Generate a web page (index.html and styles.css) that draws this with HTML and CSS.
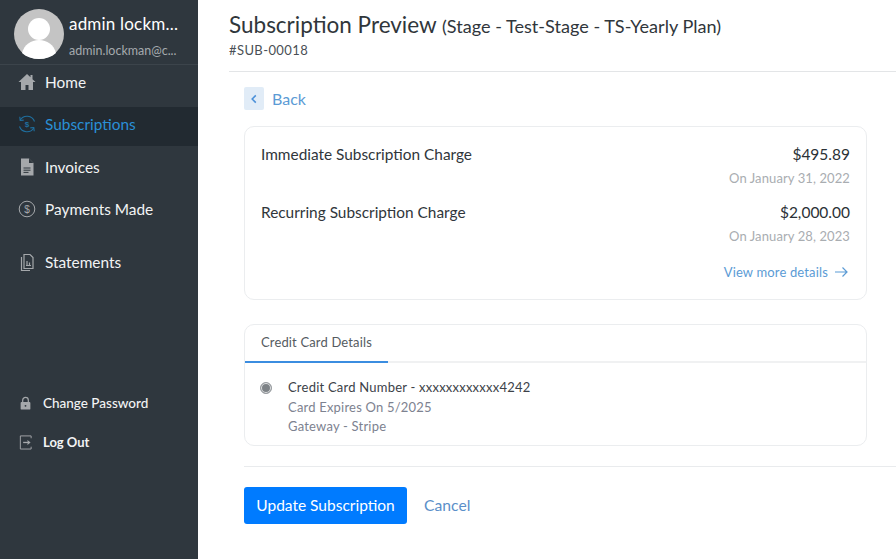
FILE: index.html
```html
<!DOCTYPE html>
<html lang="en">
<head>
<meta charset="utf-8">
<title>Subscription Preview</title>
<link rel="stylesheet" href="styles.css">
</head>
<body>
<div class="app">
  <aside class="sidebar">
    <div class="profile">
      <svg class="avatar" viewBox="0 0 50 50"><circle cx="25" cy="25" r="25" fill="#c4c4c4"/><circle cx="25" cy="20" r="11" fill="#fff"/><path d="M8 44c2-8 9-13 17-13s15 5 17 13c-4.500 4-10.500 6-17 6s-12.500-2-17-6z" fill="#fff"/></svg>
      <div class="who">
        <div class="name">admin lockm...</div>
        <div class="mail">admin.lockman@c...</div>
      </div>
    </div>
    <nav class="nav">
      <a class="item home"><svg class="ico" viewBox="1 1 18 18"><path d="M10 2 1.500 10H4v8h4.500v-5h3v5H16v-8h2.500L15.500 7.200V3h-2v2.300z" fill="#a5a8ab"/></svg>Home</a>
      <a class="item active"><svg class="ico" viewBox="1 1 18 18" fill="none" stroke="#1f6f9f" stroke-width="1.100"><path d="M3.200 6A8 8 0 0 1 17.500 7.500M16.800 14A8 8 0 0 1 2.500 12.500"/><path d="M2.800 2.800 3.200 6.500l3.500-.4M17.200 17.200 16.800 13.500l-3.500.4"/><text x="10" y="13" text-anchor="middle" font-size="8" font-weight="700" fill="#1f6f9f" stroke="none" font-family="Liberation Sans">$</text></svg>Subscriptions</a>
      <a class="item"><svg class="ico" viewBox="1 1 18 18"><path d="M4 1.500h8l4.500 4.500v12.500H4z" fill="#a5a8ab"/><path d="M12 1.500V6h4.500z" fill="#2f373e"/><path d="M6.500 11h7M6.500 13.200h7M6.500 15.400h5" stroke="#2f373e" stroke-width="1"/></svg>Invoices</a>
      <a class="item"><svg class="ico" viewBox="1 1 18 18" fill="none"><circle cx="10" cy="10" r="7.800" stroke="#a5a8ab" stroke-width="1"/><text x="10" y="13.500" text-anchor="middle" font-size="10" fill="#a5a8ab" font-family="Liberation Sans">$</text></svg>Payments Made</a>
      <a class="item spaced"><svg class="ico" viewBox="1 1 18 18" fill="none" stroke="#a5a8ab" stroke-width="1.200"><path d="M7 2.500h6l3 3v11H7z"/><path d="M4.500 5v13.500H13"/><path d="M9 13.500h5M10 9v4.500M12.500 10.500v3"/></svg>Statements</a>
    </nav>
    <div class="lower">
      <a class="sub"><svg class="ico-s" viewBox="0 0 16 16"><path d="M5 7V5a3 3 0 0 1 6 0v2" fill="none" stroke="#a5a8ab" stroke-width="1.300"/><rect x="2.800" y="7" width="10.400" height="8" rx="1" fill="#a5a8ab"/><circle cx="8" cy="11" r="1" fill="#2f373e"/></svg>Change Password</a>
      <a class="sub logout"><svg class="ico-s" viewBox="0 0 16 16" fill="none" stroke="#a5a8ab" stroke-width="1"><path d="M14 4V1.500H2.500v14H14V13"/><path d="M5.500 8.500H12" stroke-width="1.400"/><path d="M10 6.500l2.500 2-2.500 2" stroke-width="1.200"/></svg>Log Out</a>
    </div>
  </aside>
  <main class="main">
    <header class="head">
      <h1 class="title">Subscription Preview <small class="title-sub">(Stage - Test-Stage - TS-Yearly Plan)</small></h1>
      <div class="code">#SUB-00018</div>
    </header>
    <div class="content">
      <a class="back"><span class="back-box"><svg viewBox="0 0 10 10" width="12" height="12" fill="none" stroke="#4a90d9" stroke-width="1.300"><path d="M6.500 2 3.500 5l3 3"/></svg></span>Back</a>
      <section class="card charges">
        <div class="charge">
          <div class="label">Immediate Subscription Charge</div>
          <div class="vals"><div class="amount">$495.89</div><div class="date">On January 31, 2022</div></div>
        </div>
        <div class="charge">
          <div class="label">Recurring Subscription Charge</div>
          <div class="vals"><div class="amount">$2,000.00</div><div class="date">On January 28, 2023</div></div>
        </div>
        <a class="more">View more details <svg viewBox="0 0 14 12" width="14" height="12" fill="none" stroke="#5b9bd5" stroke-width="1.200"><path d="M1 6h12M8.500 1.500 13 6l-4.500 4.500"/></svg></a>
      </section>
      <section class="card pay">
        <div class="tabs"><span class="tab">Credit Card Details</span></div>
        <div class="cc">
          <span class="radio"></span>
          <div>
            <div class="cc-main">Credit Card Number - xxxxxxxxxxxx4242</div>
            <div class="cc-sub">Card Expires On 5/2025</div>
            <div class="cc-sub">Gateway - Stripe</div>
          </div>
        </div>
      </section>
      <div class="actions">
        <button class="btn">Update Subscription</button>
        <a class="cancel">Cancel</a>
      </div>
    </div>
  </main>
</div>
</body>
</html>
```
FILE: styles.css
```css
* { box-sizing: border-box; }
html, body { margin: 0; height: 100%; overflow: hidden; }
body { font-family: Lato, "Open Sans", sans-serif; background: #fff; color: #2b3136; }
.app { display: flex; height: 559px; }
.sidebar { width: 198px; flex: none; background: #2f373e; display: flex; flex-direction: column; color: #fff; }
.profile { height: 65px; padding: 9px 14px 0; display: flex; gap: 5px; border-bottom: 1px solid #3c444b; }
.avatar { width: 50px; height: 50px; flex: none; }
.who { padding-top: 3px; }
.name { font-size: 17px; line-height: 24px; letter-spacing: .2px; white-space: nowrap; }
.mail { font-size: 12.500px; line-height: 16px; margin-top: 7px; color: #a4a9ad; white-space: nowrap; }
.nav { display: flex; flex-direction: column; gap: 3px; }
.item { height: 39px; display: flex; align-items: center; gap: 9px; padding: 0 0 3px 18px; font-size: 15.400px; color: #f2f3f4; }
.item.home { padding-bottom: 5px; }
.item.active { background: #222a31; color: #2a8fd6; padding-bottom: 6px; }
.item.spaced { margin-top: 13px; padding-bottom: 7px; }
.ico { width: 18px; height: 18px; flex: none; }
.lower { margin-top: 109px; display: flex; flex-direction: column; gap: 21px; }
.sub { display: flex; align-items: center; gap: 10px; padding-left: 18px; font-size: 13.500px; line-height: 18px; font-weight: 500; color: #f2f3f4; }
.sub.logout { font-weight: 700; font-size: 13px; }
.ico-s { width: 15px; height: 16px; flex: none; }
.main { flex: 1; min-width: 0; }
.head { height: 72px; margin-left: 31px; padding-top: 9px; border-bottom: 1px solid #e3e5e7; }
.title { margin: 0; font-size: 22.500px; line-height: 32px; font-weight: 400; color: #30363b; white-space: nowrap; }
.title-sub { font-size: 18.100px; }
.code { font-size: 13px; line-height: 18px; margin-top: -1px; letter-spacing: .4px; color: #4a4f55; }
.content { padding: 15px 29px 0 46px; }
.back { display: flex; align-items: center; gap: 8px; font-size: 16px; color: #5b9bd5; height: 23px; }
.back-box { width: 20px; height: 23px; background: #e1ecf7; border-radius: 2px; display: flex; align-items: center; justify-content: center; }
.card { border: 1px solid #ebedef; border-radius: 10px; background: #fff; }
.charges { margin-top: 16px; height: 174px; padding: 16px 16px 0; display: flex; flex-direction: column; }
.charge { display: flex; justify-content: space-between; height: 58px; }
.label { font-size: 15.400px; line-height: 22px; color: #30363b; }
.vals { text-align: right; }
.amount { font-size: 15.500px; line-height: 22px; color: #2b3136; }
.date { font-size: 13px; line-height: 18px; margin-top: 4px; letter-spacing: .1px; color: #a9adb1; }
.more { align-self: flex-end; display: flex; align-items: center; gap: 6px; margin: 4px 2px 0 0; font-size: 13px; line-height: 18px; letter-spacing: .15px; color: #5b9bd5; }
.pay { margin-top: 24px; height: 122px; }
.tabs { height: 38px; border-bottom: 2px solid #f0f1f2; }
.tab { display: block; width: 143px; height: 38px; padding: 8px 0 0 16px; border-bottom: 2px solid #3b8de0; font-size: 13px; line-height: 18px; letter-spacing: .15px; color: #555b61; }
.cc { display: flex; padding: 15px 0 0 15px; gap: 16px; }
.radio { width: 12px; height: 12px; margin-top: 4px; border-radius: 50%; background: #7d8286; border: 1px solid #9a9ea2; box-shadow: inset 0 0 0 1px #e4e5e6; flex: none; }
.cc-main { font-size: 13px; line-height: 18px; letter-spacing: .22px; color: #3c4248; }
.cc-sub { font-size: 13px; line-height: 18px; margin-top: 1.500px; letter-spacing: .2px; color: #7d8290; }
.actions { margin-top: 20px; padding-top: 20px; border-top: 1px solid #e9ebed; display: flex; align-items: center; gap: 17px; margin-right: -29px; }
.btn { width: 163px; height: 37px; background: #007bff; color: #fff; border: 0; border-radius: 3px; font: 400 15.500px Lato, sans-serif; padding: 0 0 2px; }
.cancel { font-size: 15.700px; margin-top: -2px; color: #5b8fc9; }
```
